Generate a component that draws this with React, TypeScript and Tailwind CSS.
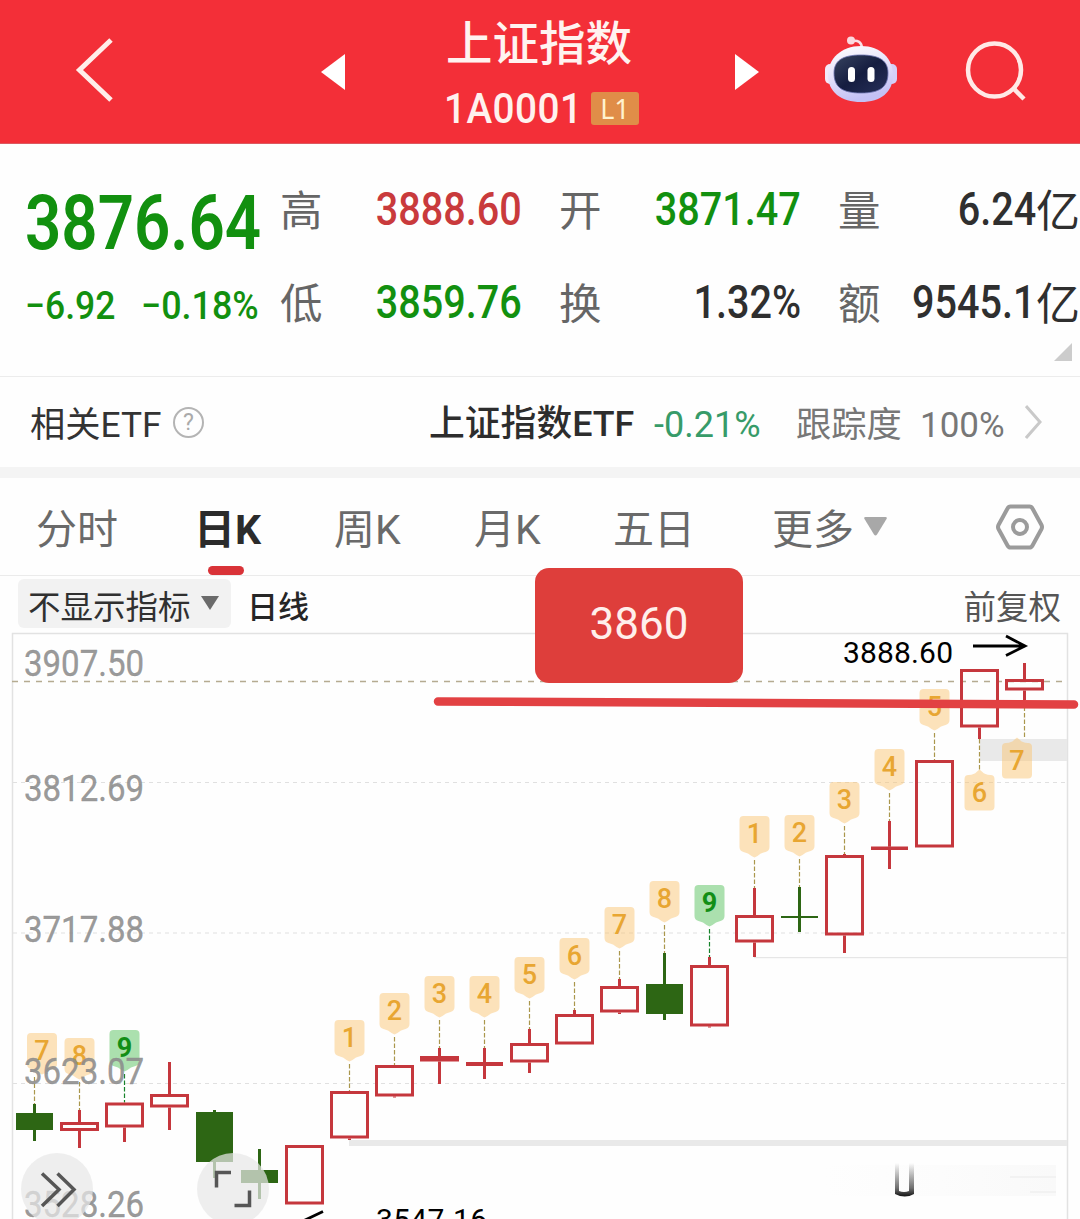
import clsx from 'clsx';

interface Candle {
  kind: 'up' | 'down' | 'doji';
  top: number;
  bottom: number;
  high: number;
  low: number;
  tag?: { n: number; y: number; dx?: number; below?: boolean };
}

const RED = '#c5373d';
const GREEN = '#2d6614';
const LEFT = 34.5;
const STEP = 45;

const candles: Candle[] = [
  { kind: 'down', top: 1113, bottom: 1130, high: 1104, low: 1141, tag: { n: 7, y: 1033, dx: 7.5 } },
  { kind: 'up', top: 1122, bottom: 1131, high: 1110, low: 1148, tag: { n: 8, y: 1038 } },
  { kind: 'up', top: 1102.5, bottom: 1127.5, high: 1102.5, low: 1142, tag: { n: 9, y: 1030 } },
  { kind: 'up', top: 1094, bottom: 1107.5, high: 1062, low: 1130 },
  { kind: 'down', top: 1112, bottom: 1162, high: 1110, low: 1178 },
  { kind: 'down', top: 1170, bottom: 1183, high: 1149, low: 1199 },
  { kind: 'up', top: 1145, bottom: 1204.5, high: 1145, low: 1204 },
  { kind: 'up', top: 1091, bottom: 1138.5, high: 1091, low: 1140, tag: { n: 1, y: 1020 } },
  { kind: 'up', top: 1065, bottom: 1096.5, high: 1065, low: 1097.5, tag: { n: 2, y: 993 } },
  { kind: 'up', top: 1056, bottom: 1061.5, high: 1048, low: 1084, tag: { n: 3, y: 976 } },
  { kind: 'doji', top: 1062, bottom: 1066, high: 1048, low: 1079, tag: { n: 4, y: 976 } },
  { kind: 'up', top: 1043, bottom: 1062.5, high: 1029, low: 1073, tag: { n: 5, y: 957 } },
  { kind: 'up', top: 1014, bottom: 1044.5, high: 1010, low: 1044, tag: { n: 6, y: 938 } },
  { kind: 'up', top: 986, bottom: 1012.5, high: 979, low: 1014, tag: { n: 7, y: 907 } },
  { kind: 'down', top: 984, bottom: 1014, high: 953, low: 1020, tag: { n: 8, y: 881 } },
  { kind: 'up', top: 965, bottom: 1026.5, high: 957, low: 1027.5, tag: { n: 9, y: 885 } },
  { kind: 'up', top: 915, bottom: 942.5, high: 888, low: 957, tag: { n: 1, y: 816 } },
  { kind: 'down', top: 916, bottom: 918, high: 887, low: 932, tag: { n: 2, y: 815 } },
  { kind: 'up', top: 855, bottom: 935.5, high: 854, low: 953, tag: { n: 3, y: 782 } },
  { kind: 'doji', top: 846.5, bottom: 850, high: 821, low: 869, tag: { n: 4, y: 749 } },
  { kind: 'up', top: 760, bottom: 847.5, high: 760, low: 847, tag: { n: 5, y: 689 } },
  { kind: 'up', top: 669, bottom: 727.5, high: 669, low: 739, tag: { n: 6, y: 770.5, below: true } },
  { kind: 'up', top: 679, bottom: 690.5, high: 663, low: 700, tag: { n: 7, y: 738.5, dx: -7.5, below: true } },
];

const priceLabels = [
  { text: '3907.50', y: 676 },
  { text: '3812.69', y: 801 },
  { text: '3717.88', y: 942 },
  { text: '3623.07', y: 1084 },
  { text: '3528.26', y: 1217 },
];

const quotes = [
  [
    { label: '高', value: '3888.60', color: 'text-[#c93a3c]' },
    { label: '开', value: '3871.47', color: 'text-[#12900f]' },
    { label: '量', value: '6.24', unit: '亿', color: 'text-[#2f2f2f]' },
  ],
  [
    { label: '低', value: '3859.76', color: 'text-[#12900f]' },
    { label: '换', value: '1.32%', color: 'text-[#2f2f2f]' },
    { label: '额', value: '9545.1', unit: '亿', color: 'text-[#2f2f2f]' },
  ],
];

const tabs = ['分时', '日K', '周K', '月K', '五日', '更多'];

function RobotIcon() {
  return (
    <svg className="-mt-1" width="74" height="68" viewBox="824 36 74 68">
      <defs>
        <linearGradient id="shell" x1="0" y1="0" x2="0.3" y2="1">
          <stop offset="0" stopColor="#fff" />
          <stop offset="0.55" stopColor="#e4e0fa" />
          <stop offset="1" stopColor="#c3c1f5" />
        </linearGradient>
        <linearGradient id="visor" x1="0" y1="0" x2="1" y2="1">
          <stop offset="0" stopColor="#37435f" />
          <stop offset="0.5" stopColor="#151d40" />
          <stop offset="1" stopColor="#27305a" />
        </linearGradient>
      </defs>
      <path d="M852 41c6-1 9.500 1 10 7" fill="none" stroke="#fbdfe6" strokeWidth="2.500" />
      <circle cx="851" cy="40.500" r="4" fill="#fbd9df" />
      <rect x="825" y="64" width="12" height="20" rx="5" fill="#f3e8f8" />
      <rect x="885" y="64" width="12" height="20" rx="5" fill="#d5d0f8" />
      <path d="M861 46c20 0 32 13 32 29 0 17-12 27-32 27s-33-10-33-27c0-16 13-29 33-29z" fill="url(#shell)" />
      <path d="M861 55c19 0 27 6 27 18 0 14-8 20-27 20s-27-6-27-20c0-12 8-18 27-18z" fill="url(#visor)" stroke="#6870ac" strokeWidth="0.800" />
      <rect x="848" y="67" width="7" height="15" rx="3.500" fill="#fff" />
      <rect x="867.500" y="67" width="7" height="15" rx="3.500" fill="#fff" />
    </svg>
  );
}

function Header() {
  return (
    <header className="grid h-36 grid-cols-[321px_113px_216px_174px_142px_1fr] items-center border-b border-[#dc5960] bg-[#f32f38] text-white">
      <svg className="-mt-1.5 ml-[74px]" width="42" height="68" viewBox="74 35 42 68" fill="none" stroke="#ffeeea" strokeWidth="5">
        <path d="M111 40 79.500 70 111 100" />
      </svg>
      <svg width="24" height="36" viewBox="0 0 24 36" fill="#fff">
        <path d="M0 18 24 0v36z" />
      </svg>
      <div className="flex flex-col items-center pt-2">
        <div className="-ml-1 h-[63px] w-[188px] whitespace-nowrap text-[46.5px] leading-[55px] font-medium text-[#fff3f0]">上证指数</div>
        <div className="flex h-[54px] w-[196px] items-center pt-0.5">
          <div className="w-[147px]">
            <span className="inline-block origin-left scale-x-[.9] text-[43px] leading-none font-medium tracking-[0.5px] text-[#fff1ee]">1A0001</span>
          </div>
          <span className="flex h-[33px] w-12 shrink-0 items-center justify-center rounded-[3px] bg-[#e08d48] font-['Noto_Sans'] text-[27px] leading-none text-[#fff2cf]">L1</span>
        </div>
      </div>
      <svg className="ml-[85px]" width="24" height="36" viewBox="0 0 24 36" fill="#fff">
        <path d="M24 18 0 0v36z" />
      </svg>
      <RobotIcon />
      <svg className="-ml-px" width="62" height="64" viewBox="965 41 62 64" fill="none" stroke="#ffe9e6" strokeWidth="4.500">
        <circle cx="994.500" cy="71" r="26.500" />
        <path d="m1013 89 11 11" />
      </svg>
    </header>
  );
}

function QuotePanel() {
  return (
    <section className="relative flex h-[233px] border-b border-[#ececec]">
      <div className="w-[281px] shrink-0 pl-[25px] text-[#12900f]">
        <div className="mt-[39px] h-[79px]">
          <span className="inline-block origin-left scale-x-[.837] text-[76px] leading-[80px] font-semibold">3876.64</span>
        </div>
        <div className="mt-[21px] flex h-[46px] text-[39px] leading-[46px] font-medium">
          <div className="w-[116px]">
            <span className="inline-block origin-left scale-x-[.91]">−6.92</span>
          </div>
          <div className="w-[118px]">
            <span className="inline-block origin-left scale-x-[.92]">−0.18%</span>
          </div>
        </div>
      </div>
      <div className="flex flex-1 flex-col">
        {quotes.map((row, i) => (
          <div key={i} className={clsx('grid h-[60px] grid-cols-[279px_279px_1fr] items-center', i === 0 ? 'mt-[35px]' : 'mt-[33px]')}>
            {row.map((q) => (
              <div key={q.label} className="flex h-[60px] items-center">
                <span className="-ml-px w-[43px] pt-[5px] text-[42.5px] leading-[54px] text-[#666]">{q.label}</span>
                <span className={clsx('flex w-[199px] items-center justify-end whitespace-nowrap text-[46px] leading-[60px] font-medium', q.color)}>
                  <span className="origin-right scale-x-[.86]">{q.value}</span>
                  {q.unit && <span className="w-[44px] pt-[5px] text-[44px] leading-[54px] font-normal">{q.unit}</span>}
                </span>
              </div>
            ))}
          </div>
        ))}
      </div>
      {/* expand corner */}
      <svg className="absolute right-2 bottom-[15px]" width="18" height="18" viewBox="0 0 18 18" fill="#ccc">
        <path d="M18 0v18H0z" />
      </svg>
    </section>
  );
}

function EtfRow() {
  return (
    <section className="flex h-[101px] items-center whitespace-nowrap border-b-[11px] border-[#f4f4f4] pt-1.5 text-[35px] leading-none">
      <span className="ml-[30px] w-[143px] pt-0.5 text-[35.3px] text-[#333]">相关ETF</span>
      <span className="-mt-1.5 flex h-[31px] w-[31px] items-center justify-center rounded-full border-2 border-[#b4b4b4] text-[23px] text-[#aaa]">?</span>
      <span className="ml-[225px] w-[225px] text-[35.8px] font-medium text-[#2d2d2d]">上证指数ETF</span>
      <span className="w-[142px] text-[36px] text-[#379b69]">-0.21%</span>
      <span className="w-[124px] pt-0.5 text-[35.3px] text-[#777]">跟踪度</span>
      <span className="w-[105px] text-[#777]">100%</span>
      <svg className="-mt-1.5" width="17" height="34" viewBox="0 0 17 34" fill="none" stroke="#c9c9c9" strokeWidth="3">
        <path d="m1 1 14 16L1 33" />
      </svg>
    </section>
  );
}

function TabBar() {
  return (
    <nav className="grid h-[98px] grid-cols-[160px_138px_140px_139px_159px_222px_1fr] items-center border-b border-[#ebebeb] pl-[37px] text-[41px] text-[#6a6a6a]">
      {tabs.map((tab) => (
        <div key={tab} className={clsx('relative flex h-full items-center', tab === '日K' && 'font-bold text-[#2b2b2b]')}>
          <span className={clsx('pt-[8px]', tab === '日K' ? '-ml-[3px]' : '-ml-px')}>{tab}</span>
          {tab === '日K' && <span className="absolute bottom-0 left-[11px] h-[9px] w-9 rounded-full bg-[#d93338]" />}
          {tab === '更多' && (
            <svg className="ml-[10px]" width="23" height="19" viewBox="0 0 23 19" fill="#a8a8a8">
              <path d="M1.500 0h20q2 0 1 2L13 17.500q-1.500 2-3 0L.5 2Q-.5 0 1.500 0z" />
            </svg>
          )}
        </div>
      ))}
      <svg className="mt-px" width="50" height="48" viewBox="0 0 50 48" fill="none" stroke="#9b9b9b" strokeWidth="4">
        <path d="M15.500 3.500h19q2 0 3 2L46.500 22q1 2 0 4l-9 16.500q-1 2-3 2h-19q-2 0-3-2L3.500 26q-1-2 0-4l9-16.500q1-2 3-2z" />
        <circle cx="25" cy="24" r="7" />
      </svg>
    </nav>
  );
}

function Toolbar() {
  return (
    <div className="flex h-14 items-center whitespace-nowrap text-[32.5px] leading-none">
      <div className="-mt-0.5 ml-[18px] flex h-[49px] w-[213px] items-center rounded-md bg-[#f2f2f2] pl-[10px] text-[#303030]">
        <span className="pt-[10px]">不显示指标</span>
        <svg className="ml-[10px]" width="18" height="14" viewBox="0 0 18 14" fill="#6b6b6b">
          <path d="M0 0h18l-9 14z" />
        </svg>
      </div>
      <span className="ml-[16px] pt-[6px] text-[31px] font-medium text-[#262626]">日线</span>
      <span className="ml-auto pt-[8px] pr-[19px] text-[#555]">前复权</span>
    </div>
  );
}

function Tag({ n, x, y, below }: { n: number; x: number; y: number; below?: boolean }) {
  const green = n === 9;
  return (
    <g transform={`translate(${x} ${y})`}>
      <path
        d={
          below
            ? 'M-11 4.500q6-.5 8-3L0-1l3 2.500q2 2.500 8 3 4 0 4 4V36q0 4-4 4h-22q-4 0-4-4V8.500q0-4 4-4z'
            : 'M-11 0h22q4 0 4 4v27q0 4-4 5-5 1-8 4L0 41.500-3 40q-3-3-8-4-4-1-4-5V4q0-4 4-4z'
        }
        fill={green ? '#6fca74' : '#fbc26a'}
        fillOpacity={green ? 0.58 : 0.46}
      />
      <text y={below ? 31 : 27} textAnchor="middle" fontSize="27" fontWeight={green ? 700 : 500} fill={green ? '#128e16' : '#e8a632'}>
        {n}
      </text>
    </g>
  );
}

function CandleMark({ candle, x }: { candle: Candle; x: number }) {
  const { kind, top, bottom, high, low, tag } = candle;
  const color = kind === 'down' ? GREEN : RED;
  return (
    <g>
      {tag && (
        <line
          x1={x}
          x2={x}
          y1={tag.below ? low : tag.y + 44}
          y2={tag.below ? tag.y : high}
          stroke={tag.n === 9 ? '#16832a' : '#aa974c'}
          strokeWidth="1.2"
          strokeDasharray="4.500 2"
        />
      )}
      {high < top && <line x1={x} x2={x} y1={high} y2={top} stroke={color} strokeWidth="3" />}
      {low > bottom && <line x1={x} x2={x} y1={bottom} y2={low} stroke={color} strokeWidth="3" />}
      {kind === 'up' ? (
        <rect x={x - 18} y={top + 1.5} width="36" height={Math.max(bottom - top - 3, 1)} fill="none" stroke={color} strokeWidth="3" />
      ) : (
        <rect x={x - 18.5} y={top} width="37" height={bottom - top} fill={color} />
      )}
      {bottom - top < 5 && <line x1={x} x2={x} y1={top} y2={bottom} stroke={color} strokeWidth="3" />}
    </g>
  );
}

function KLineChart() {
  return (
    <svg className="block" width="1080" height="587" viewBox="0 632 1080 587">
      <defs>
        <linearGradient id="fade" x1="0" y1="0" x2="0" y2="1">
          <stop offset="0" stopColor="#222" stopOpacity="0" />
          <stop offset="0.75" stopColor="#222" stopOpacity="0.65" />
          <stop offset="1" stopColor="#111" />
        </linearGradient>
        <linearGradient id="haze" x1="0" x2="1">
          <stop offset="0" stopColor="#fefefe" />
          <stop offset="0.5" stopColor="#fcfcfc" />
          <stop offset="1" stopColor="#f9f9f9" />
        </linearGradient>
      </defs>

      {/* Frame and grid */}
      <path d="M12.500 1219V633.500h1055V1219" fill="none" stroke="#e2e2e2" strokeWidth="1.5" />
      {[782.5, 933, 1083.5].map((y) => (
        <line key={y} x1="13" x2="1067" y1={y} y2={y} stroke="#e0e0e0" strokeWidth="1.2" strokeDasharray="4 4" />
      ))}
      <line x1="12" x2="1067" y1="681.500" y2="681.500" stroke="#b5ab91" strokeWidth="1.5" strokeDasharray="6 6" />

      {/* Gaps */}
      <rect x="980" y="739" width="87" height="22" fill="#e9e9e9" />
      <rect x="754" y="957" width="313" height="1.200" fill="#e6e6e6" />
      <rect x="349" y="1140" width="718" height="6" fill="#e9e9e9" />

      {candles.map((c, i) => (
        <CandleMark key={i} candle={c} x={LEFT + i * STEP} />
      ))}
      {candles.map((c, i) =>
        c.tag ? <Tag key={i} n={c.tag.n} x={LEFT + i * STEP + (c.tag.dx ?? 0)} y={c.tag.y} below={c.tag.below} /> : null
      )}

      {priceLabels.map((l) => (
        <text
          key={l.text}
          x="24"
          y={l.y}
          fontSize="36"
          fill="#8c8c8c"
          fillOpacity="0.88"
          stroke="#8c8c8c"
          strokeOpacity="0.88"
          strokeWidth="0.4"
          textLength="120"
          lengthAdjust="spacingAndGlyphs"
        >
          {l.text}
        </text>
      ))}

      {/* High / low annotations */}
      <text x="843" y="663" fontSize="30" fill="#000" textLength="110">3888.60</text>
      <path d="M973 646h51M1006 636l19 10-19 9.500" fill="none" stroke="#000" strokeWidth="2.800" />
      <text x="376" y="1230" fontSize="30" fill="#000" textLength="111">3547.16</text>
      <path d="m323 1211.500-20 9.500 20 9.500" fill="none" stroke="#000" strokeWidth="2.800" />

      {/* Faded watermark */}
      <rect x="825" y="1165" width="231" height="31" fill="url(#haze)" />
      <path d="M1010 1177h46M1030 1192h26" stroke="#efefef" strokeWidth="1.500" />
      <path d="M895 1163h4v28q5 2 10 0v-28h5v31q-9 5-19 0z" fill="url(#fade)" />

      {/* Support line */}
      <path d="M438 701.500 1074 704.500" stroke="#e24143" strokeWidth="8.500" strokeLinecap="round" />

      {/* Floating chart buttons */}
      <circle cx="57" cy="1189" r="36" fill="#e8e8e8" fillOpacity="0.72" />
      <path d="m42 1173.500 17 16-17 16.500M57.500 1173.500l16.500 16-16.500 16.500" fill="none" stroke="#565656" strokeWidth="3.500" />
      <circle cx="233" cy="1189" r="36" fill="#e8e8e8" fillOpacity="0.72" />
      <path d="M216.500 1187.500v-15H231M234.500 1205.500h15V1190.500" fill="none" stroke="#565656" strokeWidth="3.500" />
    </svg>
  );
}

export default function App() {
  return (
    <div className="relative h-[1219px] w-[1080px] overflow-hidden bg-[#fefefe] font-['Roboto','Noto_Sans_CJK_SC',sans-serif]">
      <Header />
      <QuotePanel />
      <EtfRow />
      <TabBar />
      <Toolbar />
      <KLineChart />
      <div className="absolute top-[568px] left-[535px] flex h-[115px] w-[208px] items-center justify-center rounded-[14px] bg-[#de3e3b] pb-[3px] text-[44px] leading-none text-[#ffefeb]">
        3860
      </div>
    </div>
  );
}
